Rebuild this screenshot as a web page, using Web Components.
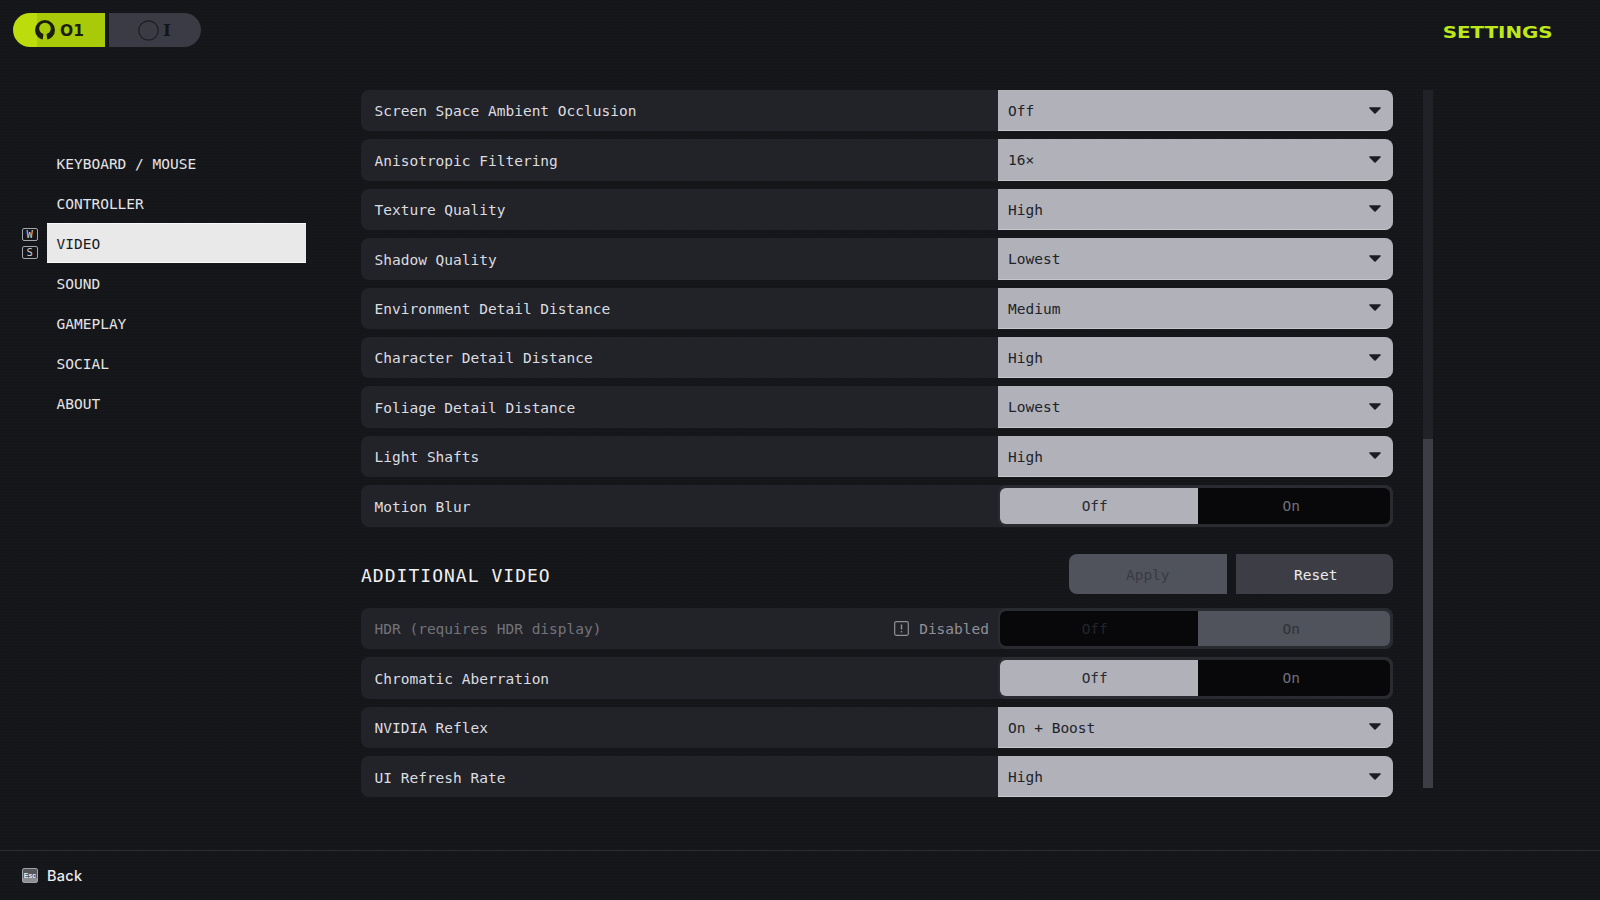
<!DOCTYPE html>
<html lang="en"><head><meta charset="utf-8"><title>Settings</title>
<style>
html,body{margin:0;padding:0;background:#15161a;}
</style></head><body>
<app-shell>
  <top-bar slot="top"></top-bar>
  <side-nav slot="side">
    <nav-item>KEYBOARD / MOUSE</nav-item>
    <nav-item>CONTROLLER</nav-item>
    <nav-item active>VIDEO</nav-item>
    <nav-item>SOUND</nav-item>
    <nav-item>GAMEPLAY</nav-item>
    <nav-item>SOCIAL</nav-item>
    <nav-item>ABOUT</nav-item>
  </side-nav>
  <settings-panel slot="main">
    <setting-row label="Screen Space Ambient Occlusion" value="Off"></setting-row>
    <setting-row label="Anisotropic Filtering" value="16×"></setting-row>
    <setting-row label="Texture Quality" value="High"></setting-row>
    <setting-row label="Shadow Quality" value="Lowest"></setting-row>
    <setting-row label="Environment Detail Distance" value="Medium"></setting-row>
    <setting-row label="Character Detail Distance" value="High"></setting-row>
    <setting-row label="Foliage Detail Distance" value="Lowest"></setting-row>
    <setting-row label="Light Shafts" value="High"></setting-row>
    <setting-row label="Motion Blur" toggle="off"></setting-row>
    <section-head>ADDITIONAL VIDEO</section-head>
    <setting-row label="HDR (requires HDR display)" toggle="on" disabled></setting-row>
    <setting-row label="Chromatic Aberration" toggle="off"></setting-row>
    <setting-row label="NVIDIA Reflex" value="On + Boost"></setting-row>
    <setting-row label="UI Refresh Rate" value="High"></setting-row>
  </settings-panel>
  <foot-bar slot="foot"></foot-bar>
</app-shell>
<script>
const MONO='"DejaVu Sans Mono","Liberation Mono",monospace';
function def(name,html){
  customElements.define(name,class extends HTMLElement{
    constructor(){super();this.attachShadow({mode:'open'});}
    connectedCallback(){this.shadowRoot.innerHTML=typeof html==='function'?html(this):html;}
  });
}
def('app-shell',`<style>
:host{display:flex;flex-direction:column;width:1600px;height:900px;overflow:hidden;color:#d8d8dc;
 background-color:#15161a;
 background-image:repeating-linear-gradient(0deg,rgba(255,255,255,.008) 0 1px,transparent 1px 3px),repeating-linear-gradient(90deg,rgba(0,0,0,.06) 0 1px,transparent 1px 3px);}
.mid{flex:1;display:flex;min-height:0}
</style>
<slot name="top"></slot>
<div class="mid"><slot name="side"></slot><slot name="main"></slot></div>
<slot name="foot"></slot>`);

def('top-bar',`<style>
:host{display:flex;justify-content:space-between;align-items:flex-start;height:90px;box-sizing:border-box;padding:13px 47px 0 13px}
.pills{display:flex;gap:4px}
.p{height:34px;display:flex;align-items:center;box-sizing:border-box}
.a{width:92px;background:#a9ca08;border-radius:17px 0 0 17px;padding-left:22px;gap:5px;background-image:linear-gradient(90deg,#bcdc0c 0 24px,transparent 24px)}
.b{width:92px;background:#3a3b44;border-radius:0 17px 17px 0;padding-left:29px;gap:4px}
.t{font:700 15.5px/1 "DejaVu Sans",sans-serif;color:#1b1e0e;padding-top:3px}
.i{font:700 17px/1 "DejaVu Serif","Liberation Serif",serif;color:#14151a;}
svg{display:block;flex:none}
h1{margin:7px 0 0;font:700 16px "DejaVu Sans",sans-serif;color:#bfe81a;display:inline-block;transform:scaleX(1.24);transform-origin:right;line-height:26px}
</style>
<div class="pills">
 <div class="p a"><svg width="20" height="20" viewBox="0 0 20 20"><circle cx="10" cy="10" r="10" fill="#1b1e0e"/><circle cx="10" cy="8.500" r="5.800" fill="#a9ca08"/><path d="M8.700 12h2.600l1 8H7.700z" fill="#a9ca08"/></svg><span class="t">O1</span></div>
 <div class="p b"><svg width="21" height="21" viewBox="0 0 21 21"><circle cx="10.500" cy="10.500" r="9.700" fill="none" stroke="#1d1e24" stroke-width="1.200"/></svg><span class="i">I</span></div>
</div>
<h1>SETTINGS</h1>`);

def('side-nav',`<style>
:host{display:flex;flex-direction:column;box-sizing:border-box;width:361px;padding:53px 55px 0 46.5px;flex:none}
</style><slot></slot>`);

def('nav-item',h=>`<style>
:host{display:flex;align-items:center;height:40.1px;box-sizing:border-box;padding:1.5px 0 0 10px;font:14.5px/1 ${MONO};color:#e4e4e7;position:relative}
:host([active]){background:#e9e9ea;color:#1a1b20;box-shadow:inset 0 1px 0 #fafafa,inset 0 -1px 0 #fafafa}
.k{position:absolute;left:-24.500px;top:5px;display:flex;flex-direction:column;gap:5px}
.k b{display:flex;align-items:center;justify-content:center;box-sizing:border-box;width:15.500px;height:13px;border:1px solid #a4a5aa;border-radius:2px;font:400 10.500px/1 ${MONO};color:#d0d1d4}
</style>${h.hasAttribute('active')?'<div class="k"><b>W</b><b>S</b></div>':''}<span><slot></slot></span>`);

def('settings-panel',`<style>
:host{display:flex;gap:30px;flex:none;align-items:flex-start}
.list{width:1032px;display:flex;flex-direction:column;gap:8px}
.sb{width:10px;height:698px;background:#212227;display:flex;flex-direction:column;justify-content:flex-end}
.sb i{display:block;height:349px;background:#3c3d45}
</style><div class="list"><slot></slot></div><div class="sb"><i></i></div>`);

def('setting-row',h=>{
 const d=h.hasAttribute('disabled'),t=h.getAttribute('toggle'),v=h.getAttribute('value');
 let ctl;
 if(t){ctl=`<div class="tog"><div class="seg ${t==='off'?'sel':''}">Off</div><div class="seg ${t==='on'?'sel':''}">On</div></div>`;}
 else{ctl=`<div class="sel-box"><span>${v}</span><svg width="12" height="7" viewBox="0 0 12 7"><path d="M.8.3h10.400c.6 0 .9.6.5 1L6.600 6.400c-.3.3-.9.3-1.200 0L.3 1.300C-.1.900.2.300.8.300z" fill="#1c1d22"/></svg></div>`;}
 return `<style>
:host{display:flex;align-items:stretch;height:41.4px;background:#222328;border-radius:8px;font:14.5px/1 ${MONO};color:#dcdce0;flex:none}
:host([disabled]){color:#72737a}
.l{flex:1;display:flex;align-items:center;padding:2px 0 0 13.500px;min-width:0}
.note{display:flex;align-items:center;gap:10px;padding:2px 9px 0 0;color:#8f9097}
.note svg{margin-top:-2px}
.sel-box{width:395px;flex:none;background:#b0b1b9;border-bottom:1px solid #c6c7cd;box-sizing:border-box;border-radius:0 8px 8px 0;display:flex;align-items:center;justify-content:space-between;padding:2px 12px 0 10px;color:#22232a}
.sel-box svg{margin-top:-2px}
svg{display:block}
.tog{width:395px;flex:none;box-sizing:border-box;padding:3px 3px 3px 2px;display:flex;border-radius:8px;background:#2a2b31}
.seg{display:flex;align-items:center;justify-content:center;background:#08080b;color:#6e6f76;padding-top:1.500px}
.seg:first-child{width:197.500px;flex:none;box-sizing:border-box;padding-right:8px;border-radius:6px 0 0 6px}
.seg:last-child{flex:1;padding-right:5px;border-radius:0 6px 6px 0}
.seg.sel{background:#b0b1b9;color:#2a2b31}
:host([disabled]) .seg{color:#24252b}
:host([disabled]) .seg.sel{background:#50525c;color:#30313a}
</style><div class="l"><span>${h.getAttribute('label')}</span></div>${d?`<div class="note"><svg width="15" height="15" viewBox="0 0 15 15"><rect x=".7" y=".7" width="13.600" height="13.600" rx="1.500" fill="none" stroke="#8f9097" stroke-width="1.200"/><path d="M7.500 3.500v5M7.500 10v1.500" stroke="#8f9097" stroke-width="1.400"/></svg><span>Disabled</span></div>`:''}${ctl}`;
});

def('section-head',`<style>
:host{display:flex;align-items:center;justify-content:space-between;height:40px;margin:19.4px 0 6px;flex:none}
h2{margin:4px 0 0;font:400 18px/1 ${MONO};letter-spacing:1.02px;color:#f0f0f2}
.b{display:flex;gap:9px}
.btn{width:157.500px;height:40px;display:flex;align-items:center;justify-content:center;font:14.500px/1 ${MONO};padding-top:3px;box-sizing:border-box}
.ap{background:#50525c;color:#3a3b44;border-radius:8px 0 0 8px}
.re{background:#3c3d45;color:#ececee;border-radius:0 8px 8px 0;padding-left:3px}
</style><h2><slot></slot></h2><div class="b"><div class="btn ap">Apply</div><div class="btn re">Reset</div></div>`);

def('foot-bar',`<style>
:host{display:flex;align-items:center;gap:9px;height:50px;flex:none;box-sizing:border-box;border-top:1px solid #2b2c30;padding:2px 0 0 22px;font:500 14.500px/1 Inter,"Liberation Sans",sans-serif;color:#eaeaec;letter-spacing:.3px}
.e{width:16px;height:15px;box-sizing:border-box;border:1px solid #a0a1a6;border-radius:2px;background:linear-gradient(#55565c 0 70%,#8d8e93 70%);color:#eee;font:700 7px/13px "Liberation Sans",sans-serif;text-align:center;letter-spacing:0;margin-top:-2px}
</style><div class="e">Esc</div><span>Back</span>`);
</script>
</body></html>
